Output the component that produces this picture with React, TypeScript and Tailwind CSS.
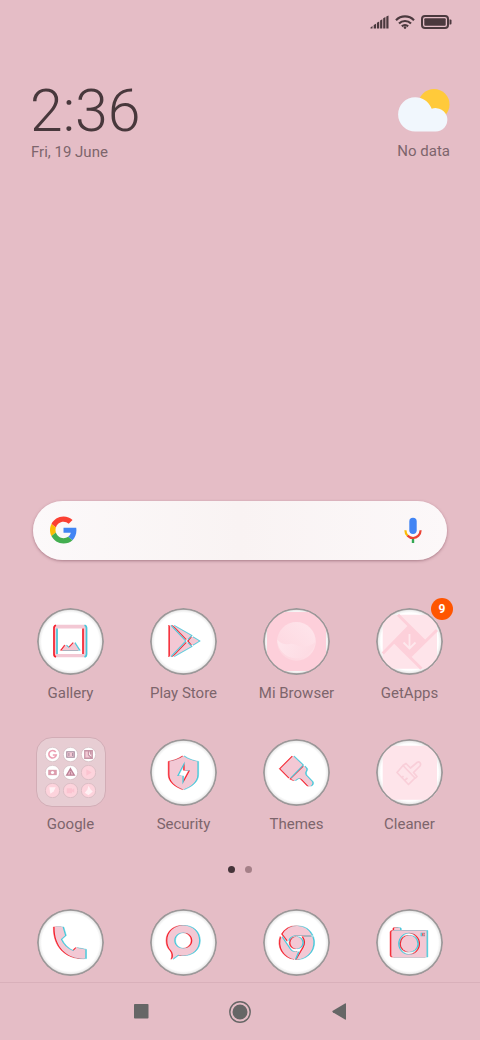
import type { ReactNode } from "react";

function Glitch({ children }: { children: ReactNode }) {
  return (
    <>
      <g transform="translate(-1.100 0)" fill="#f5212d" stroke="#f5212d" strokeWidth="0.5">{children}</g>
      <g transform="translate(1.300 0)" fill="#45c8da" stroke="#45c8da" strokeWidth="0.5">{children}</g>
      <g transform="translate(0.100 0)" fill="#f3c8d4">{children}</g>
    </>
  );
}

const Gallery = () => (
  <>
    <path d="M19.500 16.700H47a3.200 3.200 0 0 1 3.200 3.200V46a3.200 3.200 0 0 1-3.200 3.200H19.500a3.200 3.200 0 0 1-3.200-3.200V20a3.200 3.200 0 0 1 3.200-3.300zM20.500 20.500V46H46V20.500z" fillRule="evenodd" fill="#f3c8d4" />
    <path d="M19 17.200a3 3 0 0 0-2 3V46a3 3 0 0 0 2 3M46 20.500v25.500" fill="none" stroke="#f5212d" strokeWidth="1.700" />
    <path d="M47.500 17.200a3 3 0 0 1 2 3V46a3 3 0 0 1-2 3M20 20.500v25.500" fill="none" stroke="#45c8da" strokeWidth="1.700" />
    <Glitch>
      <path d="M24.500 42.300L28.500 37l3.300 3L37 34.500l5 7.800z" />
    </Glitch>
  </>
);

const PlayStore = () => (
  <Glitch>
    <path d="M19.800 17L35 33 19.800 49z" />
    <path d="M23 17.300L41 27.500 37 31.700z" />
    <path d="M23 48.700L41 38.500 37 34.300z" />
    <path d="M42 28.800L49 33 42 37.300 38.500 33z" />
  </Glitch>
);

const Browser = () => (
  <>
    <defs>
      <linearGradient id="globe-top" x1="0" y1="1" x2="1" y2="0">
        <stop offset="0" stopColor="#fdd5de" />
        <stop offset="1" stopColor="#fee6ec" />
      </linearGradient>
      <linearGradient id="globe-low" x1="0" y1="0" x2="1" y2="0.300">
        <stop offset="0" stopColor="#fee6ec" />
        <stop offset="1" stopColor="#fddbe3" />
      </linearGradient>
    </defs>
    <rect x="4" y="4" width="59" height="59" rx="7" fill="#fdcfda" />
    <circle cx="33.400" cy="33.400" r="19.300" fill="url(#globe-top)" />
    <path d="M14.200 31.500c4 4.500 8 5.500 12.500 4.500 5-1.200 8 2.500 12 2.800 5 .3 10-1.500 13.900-5A19.300 19.300 0 0 1 14.200 31.500z" fill="url(#globe-low)" />
  </>
);

const GetApps = () => (
  <>
    <rect x="6.700" y="6.700" width="54.300" height="54" rx="2" fill="#fee4ea" />
    <path d="M33.500 17.500L49 33.500 33.500 49 18 33.500z" fill="#fdd0da" />
    <path d="M22 6.700L49 33.500M61 22L33.500 49M45.500 60.700L18 33.500M6.700 45.500L33.500 18" stroke="#fdd0da" strokeWidth="3" fill="none" />
    <path d="M33.500 26v14M27.500 34.500l6 6 6-6" stroke="#fee8ed" strokeWidth="1.800" fill="none" />
  </>
);

const Security = () => (
  <Glitch>
    <path fillRule="evenodd" d="M33.300 17c4 3 9 4.500 14 5.500v13c0 7.500-6.500 12-14 15-7.500-3-14-7.500-14-15v-13c5-1 10-2.500 14-5.500zM34.500 22.500L27 37H32.300V45.500L40 31.200H34.500z" />
  </Glitch>
);

const Themes = () => (
  <Glitch>
    <path d="M30 17L17.300 29.700l9.400 9.500L39.500 26z" />
    <path d="M41 27l2 2.200c1 1.500-.5 3-.8 4-.3 1.500.3 3 1.500 4l5 5.300c2 2.500-1.500 6-4 4l-5.200-5.500c-1.200-1.300-2.500-2-4-1.700-1.500.2-3 2.200-4.300 2.200L27.800 40z" />
  </Glitch>
);

const Cleaner = () => (
  <>
    <rect x="6.700" y="6.700" width="54.300" height="54" rx="2" fill="#fee4ea" />
    <g fill="none" stroke="#f9cfd9" strokeWidth="1.700" strokeLinejoin="round">
      <path d="M27 26.500L21 33.500 32.500 45.500 39 39z" />
      <path d="M27 26.500l3-2 4.500 4.500 6.500-5.500c2.500-1.500 4.500 1 3 3.500l-6.500 6.500 3.500 4-2 2" />
      <path d="M28.500 41.500l3-2.500M26 38.500l1.500-1.300" />
    </g>
  </>
);

const Phone = () => (
  <Glitch>
    <path d="M17.500 18h8l2.500 8.500-4.300 3.800c2.500 5 6.500 9.500 12.500 11.700l3-3.300 9 1.700v9.200C31 50.500 17 39 17.500 18z" />
  </Glitch>
);

const Messages = () => (
  <Glitch>
    <path fillRule="evenodd" d="M33.200 16.500c9.300 0 15.800 6.500 15.800 15s-6.500 15-15.800 15c-2 0-3.500-.2-5-.7L22 50.300c1.500-3 1-6.500-1-8.800-2.600-2.600-3.800-6-3.800-10 0-8.500 6.800-15 16-15zM33.200 23.500c-5 0-9 3.500-9 8s4 8 9 8 9-3.500 9-8-4-8-9-8z" />
  </Glitch>
);

const Chrome = () => (
  <Glitch>
    <path d="M19.500 25A16.700 16.700 0 0 1 48.800 26.300H33.300c-4.300 0-7.500 2.500-8.200 6z" />
    <path d="M18.200 27.500L27 40.500c2 2.300 5 3 8 2.300L31.800 50.300A16.900 16.900 0 0 1 18.200 27.500z" />
    <path d="M40 27.700h9.300A17 17 0 0 1 33.500 50.500L40.500 38.500c2-3.500 2-7.500-.5-10.800z" />
    <circle cx="33.300" cy="33.700" r="6" />
  </Glitch>
);

const Camera = () => (
  <Glitch>
    <path d="M18 21v-1.300a1 1 0 0 1 1-1h4a1 1 0 0 1 1 1V21z" />
    <path fillRule="evenodd" d="M17 21.500H50.500V48H17a1.800 1.800 0 0 1-1.800-1.800V23.300a1.800 1.800 0 0 1 1.800-1.800zM33 23.800a10.900 10.900 0 1 0 0 21.800A10.900 10.900 0 0 0 33 23.800zM44.500 23.800v3.400h4.400v-3.400z" />
    <circle cx="33" cy="34.700" r="8.300" />
    <path d="M47.400 24.500h1v2h-1z" />
  </Glitch>
);

function Disc({ children }: { children: ReactNode }) {
  return (
    <span className="relative block size-[67px] overflow-hidden rounded-full">
      <svg viewBox="0 0 67 67" className="size-full" aria-hidden="true">
        <defs>
          <radialGradient id="disc-edge">
            <stop offset="0.87" stopColor="#ffffff" />
            <stop offset="0.94" stopColor="#ededed" />
            <stop offset="1" stopColor="#b4b4b4" />
          </radialGradient>
        </defs>
        <circle cx="33.500" cy="33.500" r="33" fill="url(#disc-edge)" />
        {children}
        <circle cx="33.500" cy="33.500" r="32.600" fill="none" stroke="#9c9899" strokeWidth="1.700" />
      </svg>
    </span>
  );
}

const tile = "flex flex-col items-center text-[15px] leading-5 text-[#7d656c]";

function AppTile({ name, icon, badge }: { name: string; icon: ReactNode; badge?: number }) {
  return (
    <button type="button" className={tile}>
      <span className="relative">
        <Disc>{icon}</Disc>
        {badge !== undefined && (
          <span className="absolute -right-2.5 -top-2.5 grid size-[22px] place-items-center rounded-full bg-[#ff5500] text-xs font-bold text-white">
            {badge}
          </span>
        )}
      </span>
      <span className="mt-2">{name}</span>
    </button>
  );
}

const minis: { pale?: boolean; art: ReactNode }[] = [
  { art: <path d="M10 4.800A3.500 3.500 0 1 0 10.500 7.500H7.300" fill="none" stroke="#ec9fb3" strokeWidth="1.500" /> },
  { art: <path d="M3.500 4.500h7v5h-7zM5.500 5.500v3M9 5.500v3" fill="#f3c8d4" stroke="#a58c9e" strokeWidth="1" /> },
  { art: <path d="M3.500 3.500h7v7h-7zM7 3.500v4l3.500 3M9 3v4" fill="#f3c8d4" stroke="#c695a7" strokeWidth="1.200" /> },
  { art: <><path d="M3 4.500h8v5H3z" fill="#dc9eae" /><circle cx="7" cy="7" r="1.500" fill="#fff" /></> },
  { art: <path d="M7 3.500l3.500 6h-7zM7 6v3" fill="#f3c8d4" stroke="#bd8297" strokeWidth="1.300" /> },
  { pale: true, art: <path d="M5 4l5 3-5 3z" fill="#fbc3d0" /> },
  { pale: true, art: <path d="M4 4h6L8 8l-3 2z" fill="#fff2f5" /> },
  { pale: true, art: <path d="M3.500 5h5v1.200L10.500 5v4L8.500 8v1.500h-5z" fill="#fbc3d0" /> },
  { pale: true, art: <path d="M7 2.500L9 6l2 2-4 3.500L3.500 9 6 6z" fill="#fff0f3" /> },
];

function Folder() {
  return (
    <button type="button" className={tile}>
      <span className="-mb-px -mt-0.5 grid size-[70px] grid-cols-[repeat(3,15px)] place-content-center gap-[3px] rounded-[16px] border border-[#d2adb6] bg-[#e7cdd3]">
        {minis.map(({ pale, art }, i) => (
          <svg key={i} viewBox="0 0 14 14" className="size-[15px]" aria-hidden="true">
            <circle cx="7" cy="7" r="6.700" fill={pale ? "#fdd3dc" : "#fff"} stroke="#c9b0b6" strokeWidth=".5" />
            {art}
          </svg>
        ))}
      </span>
      <span className="mt-2">Google</span>
    </button>
  );
}

function StatusBar() {
  return (
    <div className="flex h-11 items-center justify-end gap-1.5 pr-7 text-[#4b393e]" aria-label="Status">
      <svg width="19" height="14" viewBox="0 0 19 14" fill="currentColor" aria-hidden="true">
        <path d="M.5 13.500v-1L2.500 11v2.500zM3.700 10l2.300-1.200v4.700H3.700zM6.900 7.800L9.200 6.600v6.900H6.900zM10.100 5.500l2.200-1.200v9.200h-2.200zM13.200 3.200L15.400 2v11.500h-2.200zM16.300 1.500L18.500.5v13h-2.200z" />
      </svg>
      <svg width="20" height="14" viewBox="0 0 20 14" fill="none" stroke="currentColor" strokeWidth="2.200" aria-hidden="true">
        <path d="M1 5.200a12.700 12.700 0 0 1 18 0M4 8.500a8.500 8.500 0 0 1 12 0M6.900 11.400a4.400 4.400 0 0 1 6.200 0" />
        <circle cx="10" cy="12.600" r="1.300" fill="currentColor" stroke="none" />
      </svg>
      <svg width="31" height="14" viewBox="0 0 31 14" aria-hidden="true">
        <rect x="1" y="1" width="26" height="12" rx="3" fill="none" stroke="currentColor" strokeWidth="2" />
        <rect x="3.300" y="3.300" width="21.400" height="7.400" rx="1" fill="currentColor" />
        <path d="M28.500 4.500h1q1 0 1 1v3q0 1-1 1h-1z" fill="currentColor" />
      </svg>
    </div>
  );
}

export default function App() {
  return (
    <div className="flex min-h-screen flex-col bg-[#e5bdc6] font-['Roboto',sans-serif]">
      <StatusBar />
      <header className="flex items-start justify-between pl-[31px] pr-[30px] pt-9">
        <div className="-ml-px">
          <time className="block text-[59px] leading-[62px] font-light text-[#48383c]">2:36</time>
          <p className="pl-px text-[15px] leading-5 text-[#7d656c]">Fri, 19 June</p>
        </div>
        <div className="flex flex-col items-end pt-[9px]">
          <svg width="52" height="43" viewBox="0 0 52 43" aria-hidden="true">
            <circle cx="36" cy="15.500" r="15.500" fill="#ffca3a" />
            <path d="M17.200 8.300c7.500 0 13.300 4 16.500 11.500A11.700 11.700 0 1 1 37.500 42.500H17.200a17.100 17.100 0 0 1 0-34.200z" fill="#f1f7fd" />
          </svg>
          <p className="mt-[9px] text-[15px] leading-5 text-[#7d656c]">No data</p>
        </div>
      </header>

      <div className="min-h-10 flex-1" />

      <form className="mx-[33px] flex h-[59px] items-center rounded-full bg-linear-to-r from-[#fcf9fa] via-[#f9f3f3] to-[#fcf8f9] pb-px pl-[17px] pr-4 shadow-[0_1px_3px_rgba(110,60,75,0.5)]" role="search" onSubmit={(e) => e.preventDefault()}>
        <svg width="27" height="28" viewBox="0 0 48 48" className="shrink-0" aria-hidden="true">
          <path fill="#fb4033" d="M24 9.500c3.540 0 6.710 1.220 9.210 3.600l6.850-6.850C35.900 2.380 30.470 0 24 0 14.620 0 6.510 5.380 2.560 13.220l7.980 6.190C12.430 13.720 17.740 9.500 24 9.500z" />
          <path fill="#4285f4" d="M46.980 24.550c0-1.570-.15-3.090-.38-4.550H24v9.020h12.940c-.58 2.960-2.260 5.480-4.780 7.180l7.730 6c4.510-4.180 7.090-10.360 7.090-17.650z" />
          <path fill="#fbbc05" d="M10.530 28.590c-.48-1.450-.76-2.990-.76-4.590s.27-3.140.76-4.590l-7.980-6.190C.92 16.460 0 20.120 0 24c0 3.880.92 7.540 2.560 10.780l7.970-6.190z" />
          <path fill="#43ae50" d="M24 48c6.480 0 11.930-2.130 15.890-5.810l-7.730-6c-2.150 1.450-4.920 2.300-8.160 2.300-6.260 0-11.570-4.220-13.470-9.910l-7.980 6.190C6.510 42.620 14.620 48 24 48z" />
        </svg>
        <input type="text" aria-label="Search" className="h-full min-w-0 flex-1 bg-transparent px-3 text-base outline-none" />
        <button type="button" aria-label="Voice search" className="grid h-10 w-9 place-items-center">
          <svg width="18" height="26" viewBox="0 0 18 26" aria-hidden="true">
            <rect x="5.300" y=".7" width="7.400" height="16.300" rx="3.700" fill="#4285f4" />
            <path d="M9 21v5" stroke="#34a853" strokeWidth="2.400" />
            <path d="M1.400 13.200c0 2.300.8 4.200 2.300 5.600" fill="none" stroke="#fbbc05" strokeWidth="2.200" />
            <path d="M3.500 18.600c3.500 3.400 8 2.900 10.700.3 1.600-1.500 2.400-3.400 2.400-5.700" fill="none" stroke="#ea4335" strokeWidth="2.200" />
          </svg>
        </button>
      </form>

      <main className="mt-12 grid grid-cols-4 gap-y-9 px-3.5">
        <AppTile name="Gallery" icon={<Gallery />} />
        <AppTile name="Play Store" icon={<PlayStore />} />
        <AppTile name="Mi Browser" icon={<Browser />} />
        <AppTile name="GetApps" icon={<GetApps />} badge={9} />
        <Folder />
        <AppTile name="Security" icon={<Security />} />
        <AppTile name="Themes" icon={<Themes />} />
        <AppTile name="Cleaner" icon={<Cleaner />} />
      </main>

      <div className="mt-8 flex justify-center gap-2.5">
        <span className="size-[7px] rounded-full bg-[#443439]" />
        <span className="size-[7px] rounded-full bg-[#a58088]" />
      </div>

      <div className="mt-9 grid grid-cols-4 justify-items-center px-3.5 pb-1.5">
        <button type="button" aria-label="Phone"><Disc><Phone /></Disc></button>
        <button type="button" aria-label="Messages"><Disc><Messages /></Disc></button>
        <button type="button" aria-label="Chrome"><Disc><Chrome /></Disc></button>
        <button type="button" aria-label="Camera"><Disc><Camera /></Disc></button>
      </div>

      <nav className="flex h-[58px] items-center justify-center gap-[51px] border-t border-[#d9b0ba] text-[#666666]">
        <button type="button" aria-label="Recent apps" className="grid size-12 place-items-center">
          <svg width="15" height="15" viewBox="0 0 15 15" fill="currentColor" aria-hidden="true"><rect width="14.500" height="14.500" rx=".8" /></svg>
        </button>
        <button type="button" aria-label="Home" className="grid size-12 place-items-center">
          <svg width="22" height="22" viewBox="0 0 22 22" aria-hidden="true">
            <circle cx="11" cy="11" r="10.200" fill="none" stroke="currentColor" strokeWidth="1.400" />
            <circle cx="11" cy="11" r="7.500" fill="currentColor" />
          </svg>
        </button>
        <button type="button" aria-label="Back" className="grid size-12 place-items-center">
          <svg width="14" height="17" viewBox="0 0 14 17" fill="currentColor" aria-hidden="true"><path d="M13 .5q1-.5 1 .5v15q0 1-1 .5L.8 9.200q-1-.7 0-1.400z" /></svg>
        </button>
      </nav>
    </div>
  );
}
